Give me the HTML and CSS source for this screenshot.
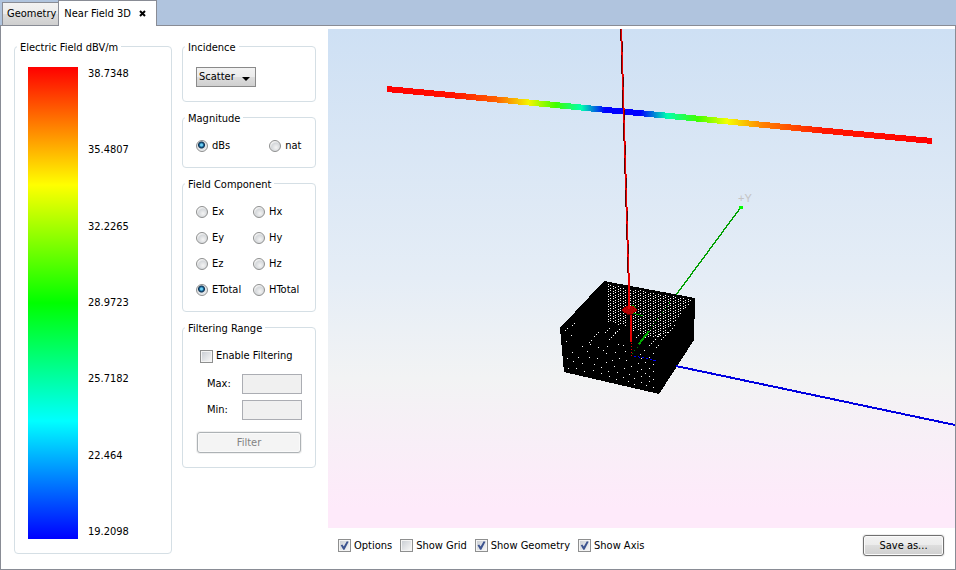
FILE: index.html
```html
<!DOCTYPE html>
<html lang="en">
<head>
<meta charset="utf-8">
<title>Near Field 3D</title>
<link rel="stylesheet" href="styles.css">
</head>
<body>
<nav class="tabs">
  <button class="tab" type="button">Geometry</button>
  <button class="tab tab-active" type="button">Near Field 3D
    <svg class="close" viewBox="0 0 7 7" aria-hidden="true"><path d="M1 1L6 6M6 1L1 6"/></svg>
  </button>
</nav>
<main class="panel">
  <fieldset class="group legend-group">
    <legend>Electric Field dBV/m</legend>
    <div class="scale">
      <div class="scale-bar"></div>
      <div class="scale-labels">
        <span>38.7348</span><span>35.4807</span><span>32.2265</span><span>28.9723</span><span>25.7182</span><span>22.464</span><span>19.2098</span>
      </div>
    </div>
  </fieldset>

  <form class="controls">
    <fieldset class="group">
      <legend>Incidence</legend>
      <div class="incidence">
        <span class="select-wrap">
          <select class="select" aria-label="Incidence"><option>Scatter</option></select>
        </span>
      </div>
    </fieldset>
    <fieldset class="group">
      <legend>Magnitude</legend>
      <div class="magnitude">
        <label class="choice"><input type="radio" name="mag" checked>dBs</label>
        <label class="choice"><input type="radio" name="mag">nat</label>
      </div>
    </fieldset>
    <fieldset class="group">
      <legend>Field Component</legend>
      <div class="component">
        <label class="choice"><input type="radio" name="comp">Ex</label>
        <label class="choice"><input type="radio" name="comp">Hx</label>
        <label class="choice"><input type="radio" name="comp">Ey</label>
        <label class="choice"><input type="radio" name="comp">Hy</label>
        <label class="choice"><input type="radio" name="comp">Ez</label>
        <label class="choice"><input type="radio" name="comp">Hz</label>
        <label class="choice"><input type="radio" name="comp" checked>ETotal</label>
        <label class="choice"><input type="radio" name="comp">HTotal</label>
      </div>
    </fieldset>
    <fieldset class="group">
      <legend>Filtering Range</legend>
      <div class="filtering">
        <label class="check"><input type="checkbox">Enable Filtering</label>
        <div class="range">
          <label for="max">Max:</label><input class="field" id="max" type="text" disabled>
          <label for="min">Min:</label><input class="field" id="min" type="text" disabled>
        </div>
        <button class="button filter-button" type="button" disabled>Filter</button>
      </div>
    </fieldset>
  </form>

  <section class="view">
    <svg class="scene" viewBox="328 29 627 499" preserveAspectRatio="xMidYMid slice" role="img" aria-label="Near field view" shape-rendering="crispEdges">
      <defs>
        <linearGradient id="field" gradientUnits="userSpaceOnUse" x1="387" y1="0" x2="932" y2="0">
          <stop offset="0" stop-color="#f00"/>
          <stop offset=".12" stop-color="#f10"/>
          <stop offset=".2" stop-color="#ff6000"/>
          <stop offset=".26" stop-color="#f5f500"/>
          <stop offset=".31" stop-color="#40ff00"/>
          <stop offset=".357" stop-color="#00ffb0"/>
          <stop offset=".4" stop-color="#00f"/>
          <stop offset=".465" stop-color="#00f"/>
          <stop offset=".514" stop-color="#00ffb0"/>
          <stop offset=".57" stop-color="#40ff00"/>
          <stop offset=".624" stop-color="#f5ff00"/>
          <stop offset=".69" stop-color="#ff8000"/>
          <stop offset=".8" stop-color="#ff1800"/>
          <stop offset="1" stop-color="#f00"/>
        </linearGradient>
        <pattern id="mesh" width="10" height="5" patternUnits="userSpaceOnUse">
          <path fill="#fff" d="M0 0h1v1h-1zM0 3h1v1h-1zM3 1h1v1h-1zM3 3h1v1h-1zM5 0h1v1h-1zM5 2h1v1h-1zM8 1h1v1h-1zM8 4h1v1h-1z"/>
        </pattern>
      </defs>

      <path d="M387 86L932 138V144L387 92Z" fill="url(#field)"/>

      <path d="M741 207L676 295" stroke="#00a000" stroke-width="1.4"/>
      <rect x="739" y="206" width="4" height="3" fill="#0f0"/>
      <text class="axis-label" x="738" y="202">+Y</text>

      <path d="M604 281L695 298L694 340L659 394L564 372L560 328Z"/>
      <path d="M606 284L693 300L662 337L645 338L641 332L625 326L607 322Z" fill="url(#mesh)"/>
      <g fill="none" stroke="#fff" stroke-width="1">
        <path stroke-dasharray="1 2" d="M565 331l5-4M572 326l4-3M594 337l6-7M589 343l5-6M609 340l7-8M615 334l6-7M605 333l6-6M631 333l5-6M649 346l7-7M657 337l5-6M661 340l7-8M668 333l7-8M656 348l4-4M636 338l6-6"/>
        <path stroke-dasharray="1 200" d="M571 335.500h1M566 341.500h1M590 344.500h1M582 346.500h1M607 346.500h1M618 344.500h1M572 352.500h1M606 353.500h1M615 352.500h1M625 351.500h1M567 358.500h1M589 357.500h1M597 358.500h1M619 358.500h1M626 360.500h1M573 361.500h1M582 363.500h1M594 364.500h1M606 362.500h1M614 366.500h1M568 368.500h1M576 368.500h1M584 371.500h1M593 370.500h1M601 373.500h1M608 371.500h1M617 372.500h1M624 368.500h1M631 366.500h1M638 363.500h1M645 362.500h1M653 364.500h1M601 367.500h1M609 376.500h1M616 379.500h1M623 377.500h1M629 374.500h1M637 371.500h1M641 369.500h1M649 368.500h1M653 371.500h1M578 357.500h1M603 350.500h1M612 360.500h1M628 381.500h1M634 378.500h1M641 376.500h1M645 373.500h1M649 376.500h1M653 379.500h1M641 382.500h1M646 385.500h1M653 387.500h1M649 381.500h1M634 384.500h1M641 358.500h1M649 357.500h1M653 353.500h1M644 350.500h1M640 354.500h1M623 345.500h1M598 347.500h1M587 351.500h1"/>
      </g>

      <path d="M676 366L955 425" stroke="#0000e0" stroke-width="2"/>
      <path d="M634 356l24 5" stroke="#00f" stroke-dasharray="2 2"/>
      <path d="M632 354l8-10M650 329l22-29" stroke="#008000" stroke-dasharray="1 3"/>
      <path d="M639 344l10-13" stroke="#0a0" stroke-width="2"/>
      <path d="M633 313l10 3M632 305l4 3" stroke="#0a0"/>
      <path fill="#e80000" d="M620 29h2v12h-2zM621 41h2v33h-2zM622 74h2v34h-2zM623 108h2v33h-2zM624 141h2v33h-2zM625 174h2v33h-2zM626 207h2v33h-2zM627 240h2v33h-2zM628 273h2v69h-2zM630 310h2v32h-2z"/>
      <path fill="#600000" d="M620 29h1v12h-1zM622 42h1v10h-1zM621 55h1v19h-1zM623 77h1v10h-1zM622 90h1v18h-1zM624 110h1v10h-1zM623 123h1v18h-1zM625 145h1v10h-1zM624 158h1v16h-1zM626 178h1v10h-1zM625 190h1v17h-1zM627 211h1v10h-1zM626 224h1v16h-1zM628 244h1v10h-1zM627 257h1v16h-1z"/>
      <path d="M628 315h2v27h-2z"/>
      <path d="M631.500 343v15" stroke="#f00000" stroke-dasharray="1 2"/>
      <path d="M622 309l5-3h6l4 3v2l-5 3h-5l-5-3z" fill="#b40000"/>
      <path d="M624 312l4 2h4l3-2-4 3h-4z" fill="#600000"/>
      <path d="M628 281h2v28h-2z" fill="#f00000"/>
    </svg>
    <div class="toolbar">
      <label class="check"><input type="checkbox" checked>Options</label>
      <label class="check"><input type="checkbox">Show Grid</label>
      <label class="check"><input type="checkbox" checked>Show Geometry</label>
      <label class="check"><input type="checkbox" checked>Show Axis</label>
      <button class="button save-button" type="button">Save as...</button>
    </div>
  </section>
</main>
</body>
</html>
```
FILE: styles.css
```css
* { box-sizing: border-box; }

body {
  margin: 0;
  min-height: 100vh;
  display: flex;
  flex-direction: column;
  background: #b0c4de;
  color: #000;
  font: 11px/14px "DejaVu Sans Condensed", Tahoma, sans-serif;
}

button, input, select { font: inherit; color: inherit; margin: 0; }

.tabs {
  display: flex;
  align-items: flex-end;
  height: 26px;
  padding-left: 2px;
  margin-bottom: -1px;
  z-index: 1;
}

.tab {
  height: 24px;
  padding: 0 2px 0 4px;
  border: 1px solid #898c95;
  border-right: 0;
  background: linear-gradient(#f2f2f2, #ebebeb 50%, #dcdcdc 50%, #cfcfcf);
  white-space: nowrap;
}

.tab-active {
  display: flex;
  align-items: center;
  gap: 8px;
  height: 26px;
  padding: 0 10px 0 5px;
  border: 1px solid #898c95;
  border-bottom: 0;
  background: #fff;
}

.close { width: 7px; height: 7px; stroke: #000; stroke-width: 2; }

.panel {
  flex: 1;
  display: flex;
  border: 1px solid #898c95;
  background: #fff;
  padding-left: 13px;
}

.group {
  display: flex;
  flex-direction: column;
  min-width: 0;
  margin: 0;
  padding: 0;
  border: 1px solid #d5dfe5;
  border-radius: 4px;
}

.group legend {
  margin-left: 2px;
  padding: 2px 3px 0;
  line-height: 13px;
}

.legend-group {
  width: 158px;
  margin: 13px 10px 15px 0;
}

.scale {
  flex: 1;
  display: flex;
  gap: 10px;
  padding: 13px 13px 14px;
}

.scale-bar {
  width: 50px;
  background: linear-gradient(#f00, #ff0 25%, #0f0 50%, #0ff 75%, #00f);
}

.scale-labels {
  display: flex;
  flex-direction: column;
  justify-content: space-between;
}

.controls {
  display: flex;
  flex-direction: column;
  gap: 8px;
  width: 134px;
  margin: 13px 12px 0 0;
}

.incidence { padding: 13px 13px 14px; }
.magnitude { display: flex; gap: 39px; padding: 14px 13px; }
.filtering { padding: 14px; }

.component {
  display: grid;
  grid-template-columns: 57px 1fr;
  grid-auto-rows: 26px;
  padding: 8px 13px;
}

.select-wrap { position: relative; display: flex; width: 60px; }

.select-wrap::after {
  content: "";
  position: absolute;
  right: 6px;
  top: 10px;
  border: 4px solid transparent;
  border-top-color: #000;
  border-bottom: 0;
  pointer-events: none;
}

.select {
  appearance: none;
  width: 100%;
  height: 20px;
  padding: 0 2px;
  border: 1px solid #8a8a8a;
  border-radius: 0;
  background: linear-gradient(#f2f2f2, #ebebeb 50%, #dddddd 50%, #cfcfcf);
}

.choice, .check { display: flex; align-items: center; white-space: nowrap; }
.choice { gap: 4px; }
.check { gap: 3px; }

.choice input {
  appearance: none;
  flex: none;
  width: 12px;
  height: 12px;
  border: 1px solid #8e8f8f;
  border-radius: 50%;
  background: radial-gradient(circle at 60% 65%, #f4f4f4, #d5d8db 50%, #f4f4f4 70%);
}

.choice input:checked {
  background: radial-gradient(circle at 45% 40%, #6fd0f4 0 1px, #1b6a9c 2px, #0d2f4f 3px, #dfe3e6 4px, #f4f4f4);
}

.check input {
  appearance: none;
  flex: none;
  width: 13px;
  height: 13px;
  padding: 1px;
  border: 1px solid #8e8f8f;
  background: linear-gradient(135deg, #cbcfd5, #f6f6f6) content-box, #f4f4f4;
}

.check input:checked::after {
  content: "";
  display: block;
  width: 9px;
  height: 9px;
  background: #3d5490;
  clip-path: polygon(8% 48%, 26% 40%, 42% 62%, 76% 2%, 96% 8%, 50% 96%, 36% 96%);
}

.filtering .check { margin-left: 3px; }

.range {
  display: grid;
  grid-template-columns: 35px 60px;
  align-items: center;
  gap: 6px 0;
  margin: 11px 0 12px 10px;
}

.field {
  width: 60px;
  height: 20px;
  border: 1px solid #abadb3;
  background: #f0f0f0;
}

.button {
  height: 21px;
  padding: 0;
  border: 1px solid #707070;
  border-radius: 3px;
  background: linear-gradient(#f2f2f2, #ebebeb 50%, #dddddd 50%, #cfcfcf);
  box-shadow: inset 0 0 0 1px #fafafa, 0 0 0 1px #f0f0f0;
}

.button:disabled { border-color: #adb2b5; background: #f4f4f4; color: #838383; }

.filter-button { display: block; width: 104px; }

.view {
  flex: 1;
  min-width: 0;
  display: flex;
  flex-direction: column;
  padding-top: 3px;
}

.scene {
  flex: 1;
  min-height: 0;
  width: 100%;
  background: linear-gradient(#cee0f4, #e5edf6 50%, #f2f3f4 70%, #feeafa 96%);
}

.axis-label { fill: #c4c4c4; font: 11px "Liberation Sans", sans-serif; }

.toolbar {
  display: flex;
  align-items: center;
  gap: 8px;
  height: 41px;
  padding: 0 11px 6px 10px;
}

.save-button { width: 81px; margin-left: auto; }
```
